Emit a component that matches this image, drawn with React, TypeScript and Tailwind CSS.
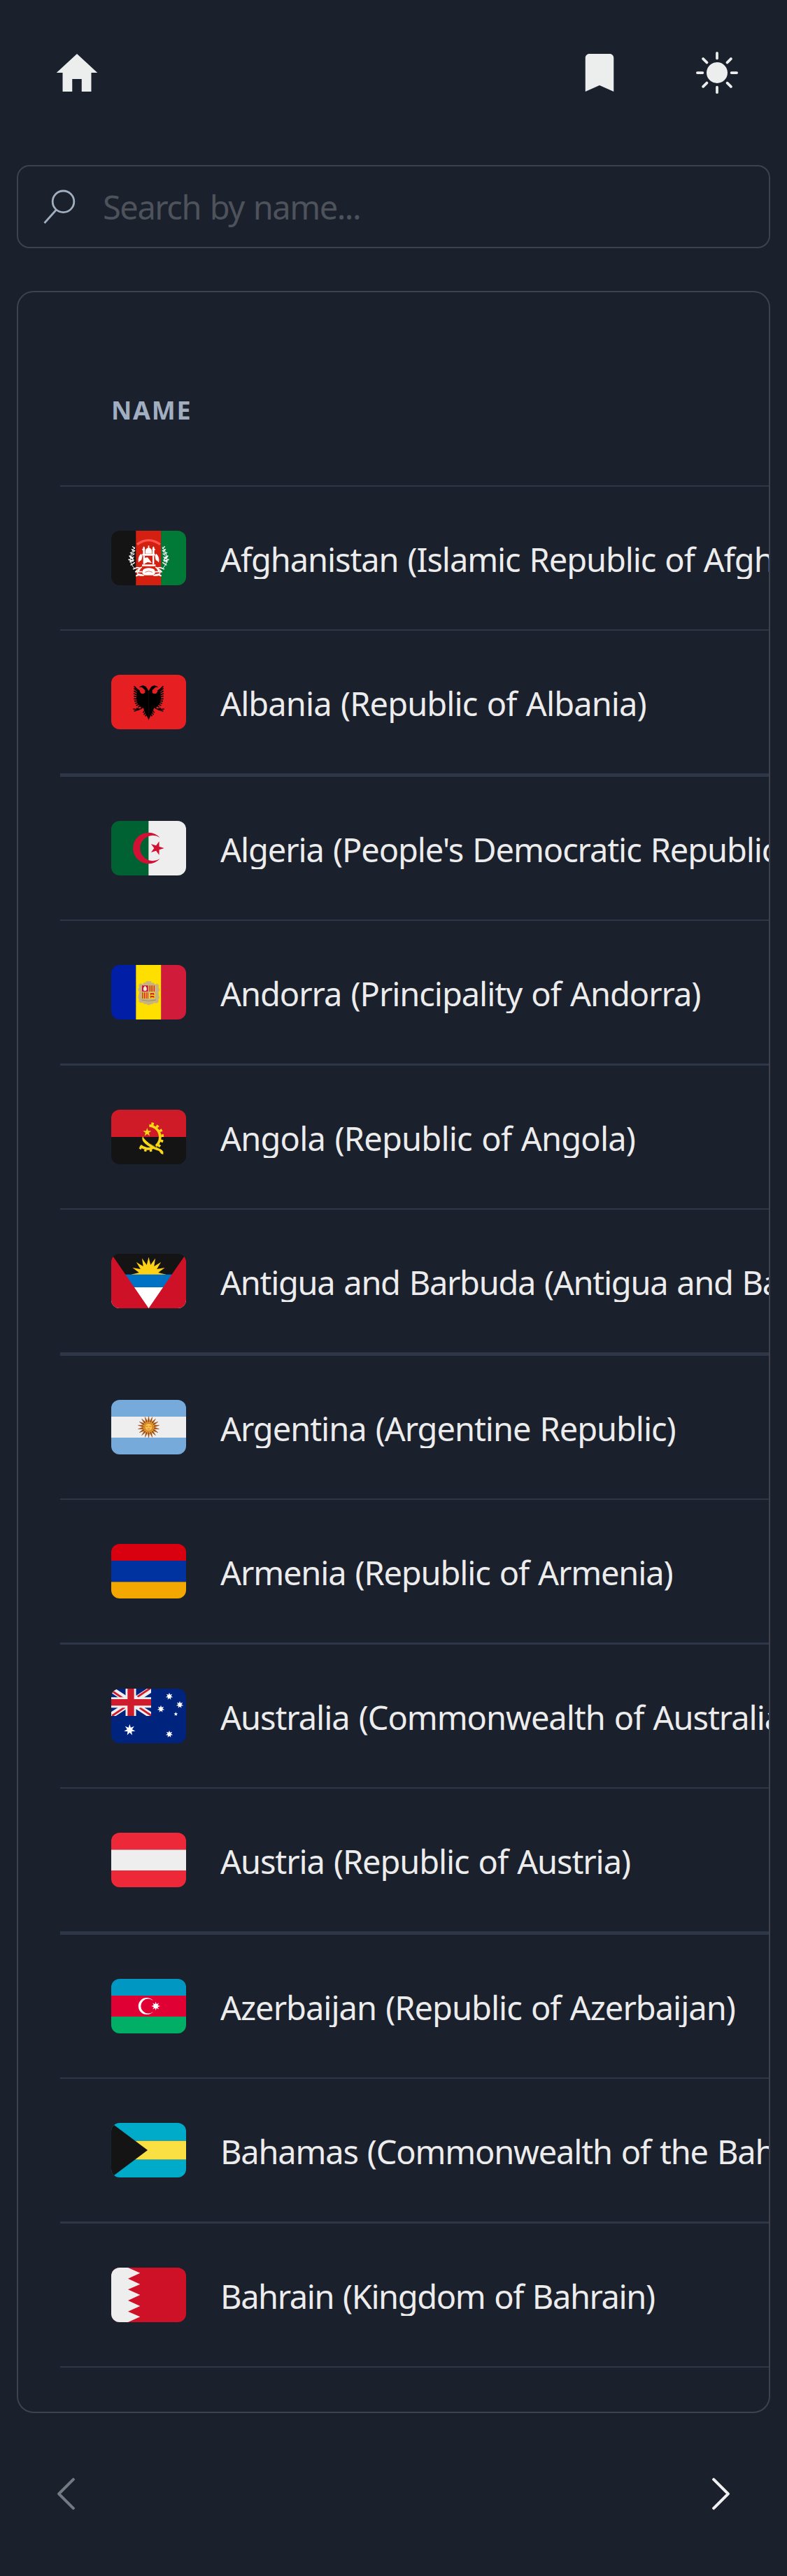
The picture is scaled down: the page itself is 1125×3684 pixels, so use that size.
import type { ReactNode } from "react";
import { IoMdBookmark, IoMdHome } from "react-icons/io";
import { BsChevronLeft, BsChevronRight, BsSunFill } from "react-icons/bs";

function star(cx: number, cy: number, n: number, outer: number, inner: number, start = -90) {
  const pts: string[] = [];
  for (let i = 0; i < n * 2; i++) {
    const r = i % 2 === 0 ? outer : inner;
    const a = ((start + (i * 180) / n) * Math.PI) / 180;
    pts.push((cx + r * Math.cos(a)).toFixed(1) + "," + (cy + r * Math.sin(a)).toFixed(1));
  }
  return pts.join(" ");
}

function Flag({ children }: { children: ReactNode }) {
  return (
    <svg
      viewBox="0 0 321 234"
      preserveAspectRatio="none"
      className="h-[78px] w-[107px] shrink-0 overflow-hidden rounded-[12px]"
    >
      {children}
    </svg>
  );
}

function Bands({ colors, edges }: { colors: string[]; edges: number[] }) {
  return (
    <>
      {colors.map((c, i) => (
        <rect key={i} x="0" y={edges[i]} width="321" height={edges[i + 1] - edges[i]} fill={c} />
      ))}
    </>
  );
}

/* One side of the wreath and the sword hilt; mirrored for the other side. */
const wreathSide = (
  <g stroke="#fff" fill="none" strokeLinecap="round">
    <path d="M101 71Q82 96 82 122Q83 146 99 160" strokeWidth="3" />
    <path d="M92 68l8 8M88 80l10 6M82 94l11 4M78 108l10 4M80 134l9-3M84 147l9-5M94 92l7-7M90 105l9-6M87 118l9-5M89 131l8-5M92 142l8-5" strokeWidth="4" />
    <path d="M80 110l13 12M76 124l17 6" strokeWidth="6" />
    <path d="M95 164l16-6 12 2M108 172l22-15M112 180l14-21M104 176l28 0" strokeWidth="5" />
    <path d="M108 193q10-6 16-2l14 0M114 186l18 4" strokeWidth="6" />
    <path d="M118 134q-4-20 10-34l4 10-4 16" fill="#fff" strokeWidth="3" />
  </g>
);

const Afghanistan = (
  <Flag>
    <rect width="107" height="234" fill="#141414" />
    <rect x="106" width="109" height="234" fill="#d32011" />
    <rect x="214" width="107" height="234" fill="#007a36" />
    <path d="M111 59Q160 23 210 59" fill="none" stroke="#ff5350" strokeWidth="10" />
    {wreathSide}
    <g transform="translate(321 0) scale(-1 1)">{wreathSide}</g>
    <g fill="#fff">
      <path d="M158 64h5v9q12 5 12 18v7h-29v-7q0-13 12-18z" />
      <path d="M136 73l4-6 4 6v29h-8zM177 73l4-6 4 6v29h-8z" />
      <path d="M133 78h12v5h-12zM176 78h12v5h-12zM133 99h55v8h-55z" />
      <path d="M137 107h7v36h-7zM177 107h7v36h-7zM144 116l12-2 18 24-18-3-12 6z" />
      <path d="M132 145h58v7h-58z" />
      <path d="M136 168q8-8 25-8t25 8l3 14-10 9h-36l-10-9z" />
    </g>
    <path d="M145 178q16-9 32 0" fill="none" stroke="#d32011" strokeWidth="2" />
  </Flag>
);

/* Left half of the eagle, mirrored around x = 160.5. */
const eagleHalf = (
  <g>
    <path d="M161 70L155 60 148 50 137 46 128 48 119 53 132 54 139 61 145 66 145 77 137 82 128 80 123 73 119 66 113 66 111 73 108 100 112 122 125 137 137 138 140 150 147 165 154 180 161 194z" />
    <path
      d="M122 70Q112 62 107 59L98 49M114 72L97 58M113 80L97 69M113 88L96 80M113 96L97 91M114 104L97 103M116 112L99 113M119 119L102 123M123 125L107 132M129 130L115 139"
      fill="none"
      stroke="#000"
      strokeWidth="5"
    />
    <path
      d="M140 138L126 146 113 152M122 147L108 144M118 150L94 147M116 150L98 156M132 143l-4 -6M144 152L136 163M147 160L140 172M152 168L146 178"
      fill="none"
      stroke="#000"
      strokeWidth="4.5"
    />
  </g>
);

const Albania = (
  <Flag>
    <rect width="321" height="234" fill="#e51f22" />
    {eagleHalf}
    <g transform="translate(321 0) scale(-1 1)">{eagleHalf}</g>
  </Flag>
);

const Algeria = (
  <Flag>
    <rect width="161" height="234" fill="#006233" />
    <rect x="160" width="161" height="234" fill="#eee" />
    <path d="M209 72A66.500 66.500 0 1 0 209 162A54.500 54.500 0 1 1 209 72z" fill="#d21034" />
    <polygon points={star(196, 117, 5, 31, 12, 0)} fill="#d21034" />
  </Flag>
);

const Andorra = (
  <Flag>
    <rect width="107" height="234" fill="#001ea6" />
    <rect x="106" width="109" height="234" fill="#ffdf00" />
    <rect x="214" width="107" height="234" fill="#d01c3a" />
    <path
      d="M148 70h24v7l10-1 5 8 9-4 9 6-2 12 5 6-2 8-4 4 2 12 3 14-5 5 2 10-8 7-14-1-4 5-8-1-3 5h-12l-4-5-9 2-4-6-14 0-6-7 1-10-4-5 3-14 3-12-5-4-1-8 5-6-2-12 8-6 9 4 5-8 9 1z"
      fill="#c7b37f"
    />
    <rect x="132" y="88" width="26" height="26" fill="#d0103a" />
    <path d="M145 91q8 5 5 18h-10q-3-13 5-18z" fill="#fce9a5" stroke="#fff" strokeWidth="3" />
    <g fill="#d0103a">
      <rect x="163" y="88" width="24" height="26" fill="#f5d417" />
      <path d="M164 88h4v26h-4zM171 88h3v26h-3zM177 88h3v26h-3zM183 88h3v26h-3z" />
      <rect x="132" y="118" width="26" height="26" fill="#f5d417" />
      <path d="M133 118h4v26h-4zM141 118h4v26h-4zM149 118h3v26h-3zM155 118h3v26h-3z" />
      <rect x="163" y="118" width="24" height="26" fill="#fedf00" />
      <path d="M166 121h18v8h-3v-2h-10v3h-3v-4zM166 133h18v8h-3v-2h-10v3h-3v-4z" />
    </g>
    <path d="M130 150q30 9 62 0" fill="none" stroke="#a08d58" strokeWidth="3" />
  </Flag>
);

const Angola = (
  <Flag>
    <rect width="321" height="117" fill="#cf1b27" />
    <rect y="117" width="321" height="117" fill="#141414" />
    <g fill="none" stroke="#f9d616">
      <path d="M163 68A50 50 0 0 1 192 156" strokeWidth="11" />
      <path d="M125 154A50 50 0 0 0 180 163" strokeWidth="11" />
      <path d="M172 59.500A58 58 0 0 1 198 162" strokeWidth="11" strokeDasharray="11 12.300" />
      <path d="M122 161A58 58 0 0 0 182 171" strokeWidth="11" strokeDasharray="10 13" />
    </g>
    <path d="M135 113Q140 126 158 140L196 162 216 172 223 180V192L214 189 205 177 187 171Q160 158 146 146Q128 131 135 113z" fill="#f9d616" />
    <path d="M160 142l32 20" stroke="#141414" strokeWidth="2" />
    <polygon points={star(154, 97, 5, 19, 7.5)} fill="#f9d616" />
  </Flag>
);

const Antigua = (
  <Flag>
    <rect width="321" height="234" fill="#141414" />
    <polygon points={star(160.5, 89, 16, 75, 42)} fill="#ffd116" />
    <rect y="89" width="321" height="55" fill="#0072c6" />
    <rect y="144" width="321" height="90" fill="#fff" />
    <path d="M0 0L160.500 234H0zM321 0L160.500 234H321z" fill="#ce1126" />
  </Flag>
);

const Argentina = (
  <Flag>
    <Bands colors={["#75aadb", "#eee", "#75aadb"]} edges={[0, 72, 162, 234]} />
    <polygon points={star(160.5, 117, 18, 46, 24)} fill="#a04d0c" stroke="#a04d0c" strokeWidth="1.5" />
    <polygon points={star(160.5, 117, 18, 29, 19, -80)} fill="#f0a93a" />
    <circle cx="160.500" cy="117" r="17" fill="#fcbf49" stroke="#a85a1c" strokeWidth="2.500" />
    <path d="M149 114h9M163 114h9M155 125h11" stroke="#c4703a" strokeWidth="3" />
  </Flag>
);

const Armenia = (
  <Flag>
    <Bands colors={["#d90010", "#0033a0", "#f2a800"]} edges={[0, 72, 163, 234]} />
  </Flag>
);

const Australia = (
  <Flag>
    <rect width="321" height="234" fill="#00247d" />
    <svg x="0" y="0" width="171" height="117" viewBox="0 0 171 117" overflow="hidden">
      <path d="M-6 -1L177 119M-6 119L177 -1" stroke="#eee" strokeWidth="25" />
      <path d="M2 9L54 44M113 35L168 -2M4 116L58 80M122 82L176 118" stroke="#cf1b2b" strokeWidth="8.500" />
      <path d="M84 0v117M0 59h171" stroke="#eee" strokeWidth="45" />
      <path d="M84 0v117M0 59h171" stroke="#cf1b2b" strokeWidth="28" />
    </svg>
    <g fill="#fff">
      <polygon points={star(79, 177, 7, 25, 11)} />
      <polygon points={star(249, 33, 7, 16, 7.5)} />
      <polygon points={star(294, 69, 7, 16, 7.5)} />
      <polygon points={star(213, 87, 7, 16, 7.5)} />
      <polygon points={star(249, 195, 7, 16, 7.5)} />
      <polygon points={star(277, 109, 5, 9, 4)} />
    </g>
  </Flag>
);

const Austria = (
  <Flag>
    <Bands colors={["#ed2939", "#eee", "#ed2939"]} edges={[0, 73, 162, 234]} />
  </Flag>
);

const Azerbaijan = (
  <Flag>
    <Bands colors={["#0098c3", "#e00034", "#00ae65"]} edges={[0, 72, 162, 234]} />
    <path d="M180 94A36 36 0 1 0 180 140A31.500 31.500 0 1 1 180 94z" fill="#fff" />
    <polygon points={star(191, 117, 8, 19, 9)} fill="#fff" />
  </Flag>
);

const Bahamas = (
  <Flag>
    <Bands colors={["#00abc9", "#fae042", "#00abc9"]} edges={[0, 77, 158, 234]} />
    <path d="M0 0L156 117 0 234z" fill="#141414" />
  </Flag>
);

const Bahrain = (
  <Flag>
    <rect width="321" height="234" fill="#ce1126" />
    <polygon
      points="0,0 72,0 124,23 72,47 124,71 72,94 124,117 72,141 124,165 72,188 124,211 72,234 0,234"
      fill="#eee"
    />
  </Flag>
);

const countries = [
  { flag: Afghanistan, name: "Afghanistan (Islamic Republic of Afghanistan)", line: "border-b-2", track: "tracking-[-1.1px]" },
  { flag: Albania, name: "Albania (Republic of Albania)", line: "border-b-[5px]", track: "tracking-[-0.9px]" },
  { flag: Algeria, name: "Algeria (People's Democratic Republic of Algeria)", line: "border-b-2", track: "tracking-[-1.1px]" },
  { flag: Andorra, name: "Andorra (Principality of Andorra)", line: "border-b-[3px]", track: "tracking-[-1.05px]" },
  { flag: Angola, name: "Angola (Republic of Angola)", line: "border-b-2", track: "tracking-[-0.8px]" },
  { flag: Antigua, name: "Antigua and Barbuda (Antigua and Barbuda)", line: "border-b-[5px]", track: "tracking-[-1.3px]" },
  { flag: Argentina, name: "Argentina (Argentine Republic)", line: "border-b-2", track: "tracking-[-1.05px]" },
  { flag: Armenia, name: "Armenia (Republic of Armenia)", line: "border-b-[3px]", track: "tracking-[-1.15px]" },
  { flag: Australia, name: "Australia (Commonwealth of Australia)", line: "border-b-2", track: "tracking-[-1.05px]" },
  { flag: Austria, name: "Austria (Republic of Austria)", line: "border-b-[5px]", track: "tracking-[-1.1px]" },
  { flag: Azerbaijan, name: "Azerbaijan (Republic of Azerbaijan)", line: "border-b-2", track: "tracking-[-1px]" },
  { flag: Bahamas, name: "Bahamas (Commonwealth of the Bahamas)", line: "border-b-[3px]", track: "tracking-[-1.2px]" },
  { flag: Bahrain, name: "Bahrain (Kingdom of Bahrain)", line: "border-b-2", track: "tracking-[-1.4px]" },
];

export default function App() {
  return (
    <div className="flex h-[3684px] w-full flex-col bg-[#1a202c] font-['Noto_Sans','Open_Sans',sans-serif] text-[#ececec]">
      <header className="flex h-[207px] items-center pr-[70px] pl-[74px] text-[#eceeed]">
        <button aria-label="Home">
          <IoMdHome className="size-[72px]" />
        </button>
        <div className="ml-auto flex items-center gap-[102px]">
          <button aria-label="Bookmarks">
            <IoMdBookmark className="size-[72px]" />
          </button>
          <button aria-label="Toggle theme">
            <BsSunFill className="size-[60px]" />
          </button>
        </div>
      </header>

      <div className="mx-6 mt-[29px] flex h-[119px] items-center rounded-[18px] border-2 border-[#3f424d]">
        <svg viewBox="0 0 48 50" className="ml-[35px] h-[50px] w-[48px] shrink-0" fill="none" stroke="#a0aec0" strokeWidth="2.8">
          <circle cx="29.5" cy="17.300" r="15.300" />
          <path d="M19.500 29L2.500 48" />
        </svg>
        <input
          placeholder="Search by name..."
          className="ml-[38px] h-[64px] flex-1 bg-transparent text-[47px] leading-[64px] tracking-[-1.45px] [word-spacing:2px] outline-none placeholder:text-[#4e525b]"
        />
      </div>

      <main className="mx-6 mt-[61px] h-[3035px] overflow-hidden rounded-[24px] border-2 border-[#3f424d] pl-[60px]">
        <div className="h-[278px] border-b-2 border-[#2d3748] pt-[144px] pl-[73px]">
          <span className="block text-[36px] leading-[49px] font-bold tracking-[1.8px] text-[#a0aec0]">NAME</span>
        </div>
        {countries.map((c) => (
          <div key={c.name} className={"flex items-center border-[#2d3748] py-[63px] pl-[73px] " + c.line}>
            {c.flag}
            <div className="mt-1 ml-[49px] h-[56px] shrink-0 overflow-hidden">
              <span className={"block text-[47px] leading-[56px] whitespace-nowrap [word-spacing:2px] " + c.track}>
                {c.name}
              </span>
            </div>
          </div>
        ))}
      </main>

      <nav className="mt-[88px] flex items-center justify-between px-[67px]">
        <button aria-label="Previous page" disabled className="text-[#757982]">
          <BsChevronLeft className="size-[55px]" stroke="currentColor" strokeWidth={0.25} />
        </button>
        <button aria-label="Next page" className="text-[#f2f2f2]">
          <BsChevronRight className="size-[55px]" stroke="currentColor" strokeWidth={0.25} />
        </button>
      </nav>
    </div>
  );
}
